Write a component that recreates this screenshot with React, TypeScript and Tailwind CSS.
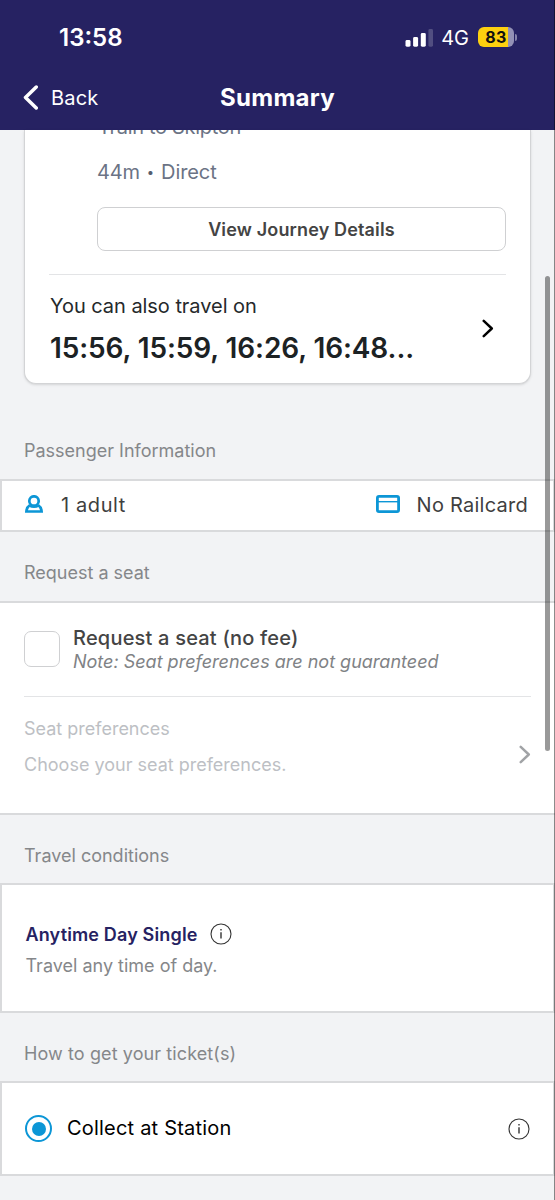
import type { ReactNode } from "react";

function Chevron({ className, d, strokeWidth }: { className: string; d: string; strokeWidth: number }) {
  return (
    <svg viewBox="0 0 12 20" className={className} fill="none" stroke="currentColor" strokeWidth={strokeWidth} strokeLinecap="round" strokeLinejoin="round">
      <path d={d} />
    </svg>
  );
}

function InfoIcon() {
  return (
    <svg viewBox="0 0 22 22" className="size-[22px] shrink-0 text-[#333]" fill="none" stroke="currentColor">
      <circle cx="11" cy="11" r="10" strokeWidth="1.1" />
      <path d="M11 9.3V15.6" strokeWidth="1.4" />
      <path d="M11 6V7.5" strokeWidth="1.4" />
    </svg>
  );
}

function SignalIcon() {
  return (
    <svg viewBox="0 0 28 18" className="h-[18px] w-7" fill="white">
      <rect x="0.5" y="11" width="5" height="6.7" rx="1.4" />
      <rect x="8.1" y="8" width="5" height="9.7" rx="1.4" />
      <rect x="15.8" y="4" width="5" height="13.7" rx="1.4" />
      <rect x="23.4" y="0" width="4.6" height="17.7" rx="1.4" opacity="0.2" />
    </svg>
  );
}

function Battery() {
  return (
    <div className="flex items-center gap-px">
      <div className="flex h-5 w-9 items-center justify-center rounded-[6px] bg-[linear-gradient(90deg,#fdd00f_30px,#9391b5_30px)]">
        <span className="text-[16px] leading-5 font-bold tracking-[0.3px] text-[#111]">83</span>
      </div>
      <div className="h-[7px] w-[2px] rounded-r-full bg-[#8583aa]" />
    </div>
  );
}

function PersonIcon() {
  return (
    <svg viewBox="0 0 18 18" className="h-[18px] w-[18px]" fill="none" stroke="#0c96d6" strokeWidth="2.7">
      <circle cx="9" cy="6" r="4.7" />
      <path d="M4.9 10.2C2.8 11.6 1.6 13.6 1.4 16.5H16.6C16.4 13.6 15.2 11.6 13.1 10.2" />
      <path d="M4.6 10.8C7 12.4 11 12.4 13.4 10.8" strokeWidth="2.2" />
    </svg>
  );
}

function CardIcon() {
  return (
    <svg viewBox="0 0 24 18" className="h-[18px] w-6" fill="none" stroke="#0c96d6">
      <rect x="1.4" y="1.4" width="21.2" height="15.2" rx="1.6" strokeWidth="2.8" />
      <path d="M2 6.7H22" strokeWidth="1.4" />
    </svg>
  );
}

function SectionLabel({ className, children }: { className: string; children: ReactNode }) {
  return <h2 className={`flex items-center pl-6 text-[18px] leading-6 font-normal text-[#85878a] ${className}`}>{children}</h2>;
}

export default function App() {
  return (
    <div className="relative flex h-[1200px] w-[555px] flex-col overflow-hidden bg-[#f2f3f5] font-['Inter',sans-serif]">
      <header className="h-[130px] shrink-0 bg-[#262262] text-white">
        <div className="flex h-[74px] items-center justify-between pt-px pr-[38px] pl-[59px]">
          <span className="pt-px text-[24px] leading-7 font-semibold">13:58</span>
          <div className="flex items-center">
            <SignalIcon />
            <span className="ml-[8px] text-[20px] leading-6">4G</span>
            <div className="ml-[9px] pb-px"><Battery /></div>
          </div>
        </div>
        <div className="grid h-12 grid-cols-[1fr_auto_1fr] items-center">
          <div className="flex items-center pb-0.5 pl-[23px]">
            <Chevron className="h-[25px] w-[15px]" d="M10.6 1.6L2 10L10.6 18.4" strokeWidth={2.8} />
            <span className="ml-[13px] pt-px text-[20px] leading-6 tracking-[0.2px]">Back</span>
          </div>
          <h1 className="text-[24px] leading-7 font-bold tracking-[0.3px]">Summary</h1>
        </div>
      </header>

      <section className="ml-6 h-[254px] w-[507px] shrink-0 rounded-b-[12px] border border-t-0 border-[#d3d4d6] bg-white px-6 shadow-sm">
        <div className="h-[10px] overflow-hidden pl-[49px]">
          <div className="mt-[-15px] text-[20px] leading-6 tracking-[-0.3px] text-[#6b7385]">Train to Skipton</div>
        </div>
        <div className="mt-5 flex items-center pl-[48px] text-[20px] leading-6 text-[#6b7385]">
          <span className="tracking-[-0.2px]">44m</span><span className="mx-[7px] text-[13px] text-[#555d6e]">•</span><span className="tracking-[-0.1px]">Direct</span>
        </div>
        <button className="mt-[23px] ml-12 flex h-11 w-[409px] items-center justify-center rounded-[8px] border border-[#cfd0d2] text-[18px] font-semibold tracking-[0.15px] text-[#444]">View Journey Details</button>
        <div className="mt-[23px] flex h-[107px] items-center justify-between border-t border-[#e3e4e6] pr-3">
          <div className="pl-px">
            <p className="mt-[2px] text-[20px] leading-6 tracking-[-0.05px] text-[#25292b]">You can also travel on</p>
            <p className="mt-[14px] text-[28px] leading-8 font-semibold tracking-[-0.1px] text-[#1c2224]">15:56, 15:59, 16:26, 16:48...</p>
          </div>
          <Chevron className="h-[19px] w-[12px] text-black" d="M1.5 2L10 10L1.5 18" strokeWidth={2.6} />
        </div>
      </section>

      <SectionLabel className="mt-[55px] h-6">Passenger Information</SectionLabel>
      <section className="mt-4 flex h-[53px] shrink-0 items-center border-2 border-[#d9dadc] bg-white pr-[25px] pb-0.5 pl-[23px] text-[20px] text-[#3f3f3f]">
        <div className="pb-px"><PersonIcon /></div>
        <span className="ml-[18px] tracking-[0.6px]">1 adult</span>
        <div className="ml-auto flex items-center">
          <div className="pb-px"><CardIcon /></div>
          <span className="ml-[17px] tracking-[0.25px]">No Railcard</span>
        </div>
      </section>

      <SectionLabel className="mt-[29px] h-6">Request a seat</SectionLabel>
      <section className="mt-4 h-[214px] shrink-0 border-y-2 border-[#d9dadc] bg-white px-6">
        <div className="flex h-[94px] items-center border-b border-[#e3e4e6]">
          <span className="mb-0.5 size-9 shrink-0 rounded-[7px] border border-[#cfd0d2]" />
          <div className="ml-[13px] pt-px">
            <p className="text-[20px] leading-6 font-medium tracking-[0.2px] text-[#444]">Request a seat (no fee)</p>
            <p className="text-[18px] leading-6 text-[#808285] italic">Note: Seat preferences are not guaranteed</p>
          </div>
        </div>
        <div className="flex items-center justify-between pt-5 text-[18px] leading-6 text-[#bdbfc4]">
          <div>
            <p>Seat preferences</p>
            <p className="mt-3">Choose your seat preferences.</p>
          </div>
          <Chevron className="mt-[15px] h-[19px] w-[12px] text-[#a1a3a6]" d="M1.5 2L10 10L1.5 18" strokeWidth={2.6} />
        </div>
      </section>

      <SectionLabel className="mt-[29px] h-6">Travel conditions</SectionLabel>
      <section className="mt-[15px] h-[130px] shrink-0 border-2 border-[#d9dadc] bg-white pt-[35px] pl-[23.5px]">
        <div className="flex h-7 items-center">
          <h3 className="text-[18px] font-semibold tracking-[0.15px] text-[#262262]">Anytime Day Single</h3>
          <div className="ml-[12px]"><InfoIcon /></div>
        </div>
        <p className="mt-1.5 text-[18px] leading-6 text-[#85878a]">Travel any time of day.</p>
      </section>

      <SectionLabel className="mt-[29px] h-6 tracking-[0.1px]">How to get your ticket(s)</SectionLabel>
      <section className="mt-[15px] flex h-[95px] shrink-0 items-center border-2 border-[#d9dadc] bg-white pr-[23px] pl-[23px]">
        <span className="flex size-[27px] items-center justify-center rounded-full border-2 border-[#0c96d6]">
          <span className="size-[14px] rounded-full bg-[#0c96d6]" />
        </span>
        <span className="ml-[15px] pb-0.5 text-[20px] tracking-[0.2px] text-black">Collect at Station</span>
        <div className="ml-auto"><InfoIcon /></div>
      </section>

      <div className="absolute top-[276px] left-[545px] h-[475px] w-[5px] rounded-full bg-black/40" />
      <div className="absolute top-0 right-0 h-full w-px bg-black/45" />
    </div>
  );
}
